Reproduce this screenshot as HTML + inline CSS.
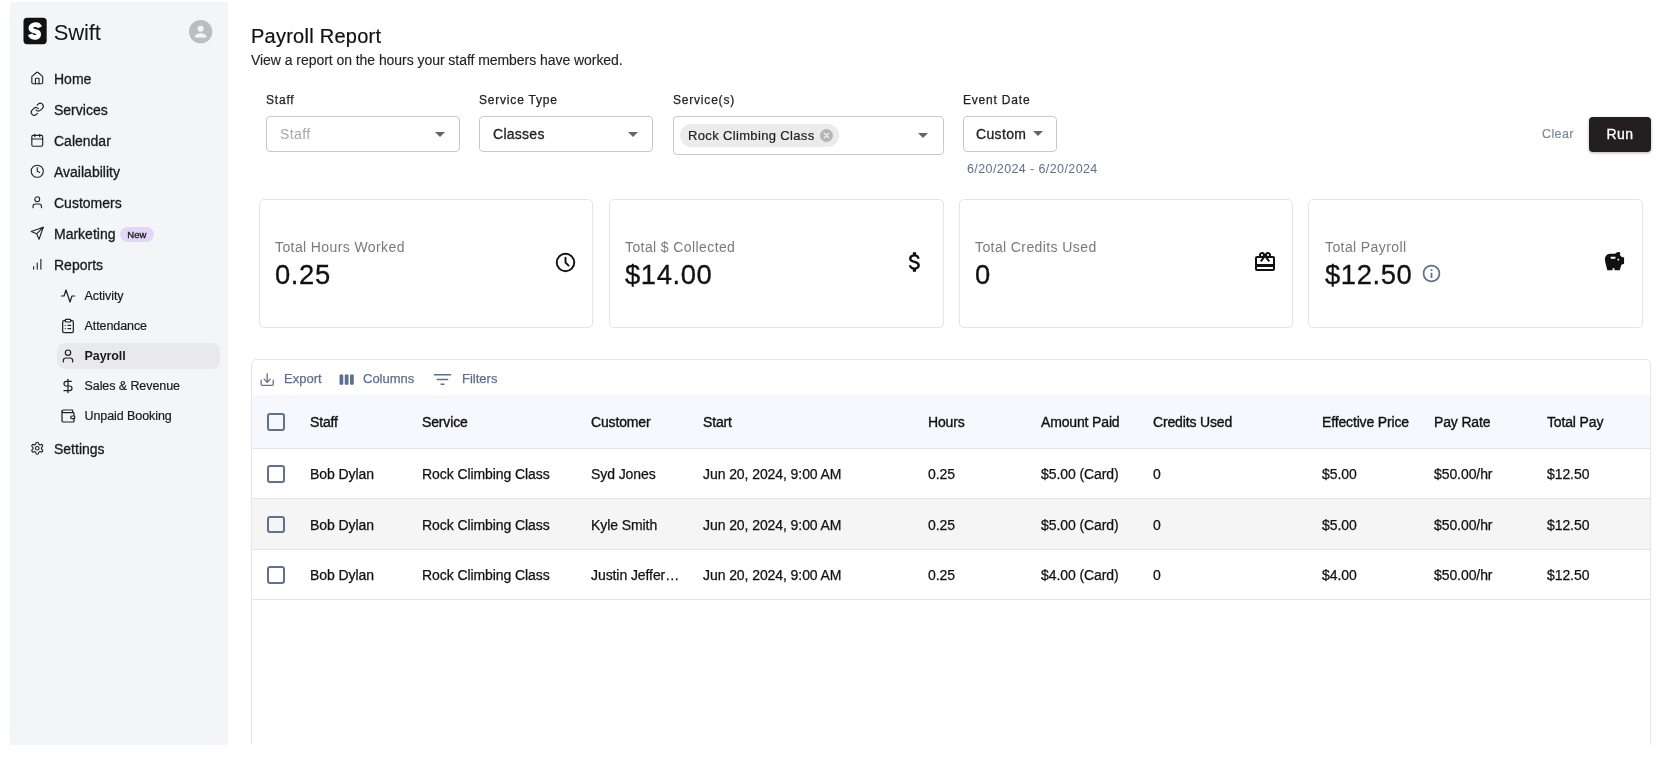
<!DOCTYPE html>
<html><head><meta charset="utf-8">
<style>
*{box-sizing:border-box;margin:0;padding:0}
html,body{width:1660px;height:758px;background:#fff;overflow:hidden}
body{font-family:"Liberation Sans",sans-serif;color:#1a1a1a;position:relative}
#clip{will-change:transform;position:absolute;left:0;top:0;width:1660px;height:745px;overflow:hidden;background:#fff}
.abs{position:absolute}
#side{position:absolute;left:10px;top:2px;width:218px;height:743px;background:#f4f5f7}
.nav{position:absolute;left:54px;font-size:14px;line-height:16px;color:#1a1a1a;white-space:nowrap;-webkit-text-stroke:0.3px #1a1a1a}
.sub{position:absolute;left:84.500px;letter-spacing:-0.080px;font-size:12.5px;line-height:16px;color:#1a1a1a;white-space:nowrap;-webkit-text-stroke:0.2px #1a1a1a}
.ico{position:absolute;overflow:visible}
.lbl{position:absolute;top:92.500px;font-size:12px;line-height:14px;letter-spacing:0.8px;color:#222;-webkit-text-stroke:0.25px #222;white-space:nowrap}
.sel{position:absolute;border:1px solid #c9c9c9;border-radius:4px;background:#fff}
.card{position:absolute;top:199px;width:335px;height:129px;border:1px solid #e5e5e5;border-radius:5px;background:#fff}
.card .t{position:absolute;left:15px;top:39px;font-size:14px;line-height:16px;color:#7a7a7a;letter-spacing:0.4px;white-space:nowrap}
.card .v{position:absolute;left:15px;top:59px;font-size:27.400px;line-height:32px;color:#111;letter-spacing:0.6px;white-space:nowrap;-webkit-text-stroke:0.300px #111}
#tbl{position:absolute;left:251px;top:359px;width:1400px;height:420px;border:1px solid #e6e6e6;border-radius:5px;background:#fff;overflow:hidden}
.tb{position:absolute;top:11.300px;font-size:13px;line-height:16px;color:#5f6f8f;white-space:nowrap;-webkit-text-stroke:0.250px #5f6f8f}
.row{position:absolute;left:0;width:1398px;border-bottom:1px solid #e5e5e5}
.c{position:absolute;font-size:14px;line-height:16px;color:#111;white-space:nowrap;letter-spacing:-0.08px;-webkit-text-stroke:0.250px #111;margin-top:0.400px}
.h{-webkit-text-stroke:0.350px #111;letter-spacing:-0.15px !important}
.cb{position:absolute;left:15px;width:17.500px;height:17.500px;border:2px solid #62708f;border-radius:3px;background:transparent}
</style></head><body>
<div id="clip">
<div id="side"></div>
<!-- logo -->
<svg class="ico" style="left:23px;top:17px" width="24" height="28" viewBox="-0.500 -0.800 24 28"><rect x="0" y="0" width="23.200" height="26.400" rx="3.600" fill="#121212"/><path d="M16.300 9.600 C15.400 7.200 12.800 6.600 10.600 7.000 C8.200 7.500 6.900 9.400 7.400 11.000 C8.000 12.800 10.200 13.100 12.200 13.600 C14.600 14.200 15.800 15.400 15.200 17.200 C14.600 19.000 12.400 19.800 10.200 19.400 C8.400 19.000 7.200 18.000 6.700 16.400" fill="none" stroke="#fff" stroke-width="4.600" stroke-linecap="butt"/></svg>
<div class="abs" style="left:53.700px;top:18.800px;font-size:22px;line-height:28px;letter-spacing:-0.100px;color:#151515">Swift</div>
<svg class="ico" style="left:189px;top:20.300px" width="23.300" height="23.300" viewBox="0 0 24 24"><circle cx="12" cy="12" r="12" fill="#bdbdbd"/><circle cx="12" cy="8.900" r="3.100" fill="#f4f5f7"/><path d="M5.900 18c0-3 4-4.300 6.100-4.300s6.100 1.300 6.100 4.300z" fill="#f4f5f7"/></svg>
<div class="abs" style="left:57px;top:343px;width:163px;height:26px;border-radius:8px;background:#e9e9eb"></div>
<svg class="ico" style="left:30.200px;top:70.75px" width="14.500" height="14.500" viewBox="0 0 24 24" fill="none" stroke="#222" stroke-width="1.850" stroke-linecap="round" stroke-linejoin="round"><path d="M15 21v-8a1 1 0 0 0-1-1h-4a1 1 0 0 0-1 1v8"/><path d="M3 10a2 2 0 0 1 .709-1.528l7-5.999a2 2 0 0 1 2.582 0l7 5.999A2 2 0 0 1 21 10v9a2 2 0 0 1-2 2H5a2 2 0 0 1-2-2z"/></svg>
<div class="nav" style="top:71px">Home</div>
<svg class="ico" style="left:30.200px;top:101.75px" width="14.500" height="14.500" viewBox="0 0 24 24" fill="none" stroke="#222" stroke-width="1.850" stroke-linecap="round" stroke-linejoin="round"><path d="M10 13a5 5 0 0 0 7.54.54l3-3a5 5 0 0 0-7.07-7.07l-1.72 1.71"/><path d="M14 11a5 5 0 0 0-7.54-.54l-3 3a5 5 0 0 0 7.07 7.07l1.71-1.71"/></svg>
<div class="nav" style="top:102px">Services</div>
<svg class="ico" style="left:30.200px;top:132.75px" width="14.500" height="14.500" viewBox="0 0 24 24" fill="none" stroke="#222" stroke-width="1.850" stroke-linecap="round" stroke-linejoin="round"><path d="M8 2v4"/><path d="M16 2v4"/><rect width="18" height="18" x="3" y="4" rx="2"/><path d="M3 10h18"/></svg>
<div class="nav" style="top:133px">Calendar</div>
<svg class="ico" style="left:30.200px;top:163.75px" width="14.500" height="14.500" viewBox="0 0 24 24" fill="none" stroke="#222" stroke-width="1.850" stroke-linecap="round" stroke-linejoin="round"><circle cx="12" cy="12" r="10"/><polyline points="12 6 12 12 16 14"/></svg>
<div class="nav" style="top:164px">Availability</div>
<svg class="ico" style="left:30.200px;top:194.75px" width="14.500" height="14.500" viewBox="0 0 24 24" fill="none" stroke="#222" stroke-width="1.850" stroke-linecap="round" stroke-linejoin="round"><path d="M19 21v-2a4 4 0 0 0-4-4H9a4 4 0 0 0-4 4v2"/><circle cx="12" cy="7" r="4"/></svg>
<div class="nav" style="top:195px">Customers</div>
<svg class="ico" style="left:30.200px;top:225.75px" width="14.500" height="14.500" viewBox="0 0 24 24" fill="none" stroke="#222" stroke-width="1.850" stroke-linecap="round" stroke-linejoin="round"><path d="m22 2-7 20-4-9-9-4Z"/><path d="M22 2 11 13"/></svg>
<div class="nav" style="top:226px">Marketing</div>
<svg class="ico" style="left:30.200px;top:256.75px" width="14.500" height="14.500" viewBox="0 0 24 24" fill="none" stroke="#222" stroke-width="1.850" stroke-linecap="round" stroke-linejoin="round"><line x1="18" x2="18" y1="20" y2="4"/><line x1="12" x2="12" y1="20" y2="10"/><line x1="6" x2="6" y1="20" y2="16"/></svg>
<div class="nav" style="top:257px">Reports</div>
<svg class="ico" style="left:30.200px;top:440.75px" width="14.500" height="14.500" viewBox="0 0 24 24" fill="none" stroke="#222" stroke-width="1.850" stroke-linecap="round" stroke-linejoin="round"><path d="M12.22 2h-.44a2 2 0 0 0-2 2v.18a2 2 0 0 1-1 1.73l-.43.25a2 2 0 0 1-2 0l-.15-.08a2 2 0 0 0-2.73.73l-.22.38a2 2 0 0 0 .73 2.73l.15.1a2 2 0 0 1 1 1.72v.51a2 2 0 0 1-1 1.74l-.15.09a2 2 0 0 0-.73 2.73l.22.38a2 2 0 0 0 2.73.73l.15-.08a2 2 0 0 1 2 0l.43.25a2 2 0 0 1 1 1.73V20a2 2 0 0 0 2 2h.44a2 2 0 0 0 2-2v-.18a2 2 0 0 1 1-1.73l.43-.25a2 2 0 0 1 2 0l.15.08a2 2 0 0 0 2.73-.73l.22-.39a2 2 0 0 0-.73-2.73l-.15-.08a2 2 0 0 1-1-1.74v-.5a2 2 0 0 1 1-1.74l.15-.09a2 2 0 0 0 .73-2.73l-.22-.38a2 2 0 0 0-2.73-.73l-.15.08a2 2 0 0 1-2 0l-.43-.25a2 2 0 0 1-1-1.73V4a2 2 0 0 0-2-2z"/><circle cx="12" cy="12" r="3"/></svg>
<div class="nav" style="top:441px">Settings</div>
<svg class="ico" style="left:59.500px;top:288px" width="16" height="16" viewBox="0 0 24 24" fill="none" stroke="#222" stroke-width="1.850" stroke-linecap="round" stroke-linejoin="round"><path d="M22 12h-4l-3 9L9 3l-3 9H2"/></svg>
<div class="sub" style="top:288px">Activity</div>
<svg class="ico" style="left:59.500px;top:318px" width="16" height="16" viewBox="0 0 24 24" fill="none" stroke="#222" stroke-width="1.850" stroke-linecap="round" stroke-linejoin="round"><rect width="8" height="4" x="8" y="2" rx="1" ry="1"/><path d="M16 4h2a2 2 0 0 1 2 2v14a2 2 0 0 1-2 2H6a2 2 0 0 1-2-2V6a2 2 0 0 1 2-2h2"/><path d="M12 11h4"/><path d="M12 16h4"/><path d="M8 11h.01"/><path d="M8 16h.01"/></svg>
<div class="sub" style="top:318px">Attendance</div>
<svg class="ico" style="left:59.500px;top:348px" width="16" height="16" viewBox="0 0 24 24" fill="none" stroke="#222" stroke-width="1.850" stroke-linecap="round" stroke-linejoin="round"><path d="M19 21v-2a4 4 0 0 0-4-4H9a4 4 0 0 0-4 4v2"/><circle cx="12" cy="7" r="4"/></svg>
<div class="sub" style="top:348px;font-weight:bold;-webkit-text-stroke:0">Payroll</div>
<svg class="ico" style="left:59.500px;top:378px" width="16" height="16" viewBox="0 0 24 24" fill="none" stroke="#222" stroke-width="1.850" stroke-linecap="round" stroke-linejoin="round"><line x1="12" x2="12" y1="2" y2="22"/><path d="M17 5H9.5a3.5 3.5 0 0 0 0 7h5a3.5 3.5 0 0 1 0 7H6"/></svg>
<div class="sub" style="top:378px">Sales &amp; Revenue</div>
<svg class="ico" style="left:59.500px;top:408px" width="16" height="16" viewBox="0 0 24 24" fill="none" stroke="#222" stroke-width="1.850" stroke-linecap="round" stroke-linejoin="round"><path d="M19 7V4a1 1 0 0 0-1-1H5a2 2 0 0 0 0 4h15a1 1 0 0 1 1 1v4h-3a2 2 0 0 0 0 4h3a1 1 0 0 0 1-1v-2a1 1 0 0 0-1-1"/><path d="M3 5v14a2 2 0 0 0 2 2h15a1 1 0 0 0 1-1v-4"/></svg>
<div class="sub" style="top:408px">Unpaid Booking</div>
<div class="abs" style="left:119.500px;top:227px;width:34.600px;height:15px;border-radius:8px;background:#e2d6fa;font-size:9.500px;line-height:15px;text-align:center;color:#1a1a1a;-webkit-text-stroke:0.300px #1a1a1a">New</div>
<div class="abs" style="left:251px;top:24px;font-size:20px;line-height:24px;letter-spacing:0.25px;color:#111;-webkit-text-stroke:0.200px #111;white-space:nowrap">Payroll Report</div>
<div class="abs" style="left:251px;top:52px;font-size:14px;line-height:16px;letter-spacing:-0.05px;color:#222;-webkit-text-stroke:0.120px #222;white-space:nowrap">View a report on the hours your staff members have worked.</div>
<div class="lbl" style="left:266px">Staff</div>
<div class="lbl" style="left:479px">Service Type</div>
<div class="lbl" style="left:673px">Service(s)</div>
<div class="lbl" style="left:963px">Event Date</div>
<!-- staff -->
<div class="sel" style="left:266px;top:116px;width:194px;height:36px"></div>
<div class="abs" style="left:280px;top:125.600px;font-size:14px;line-height:16px;letter-spacing:0.4px;color:#a8a8a8">Staff</div>
<svg class="ico" style="left:434.700px;top:131.600px" width="10" height="5.200" viewBox="0 0 10 5"><path d="M0 0h10L5 5z" fill="#666"/></svg>
<!-- service type -->
<div class="sel" style="left:479px;top:116px;width:174px;height:36px"></div>
<div class="abs" style="left:493px;top:125.600px;font-size:14px;line-height:16px;letter-spacing:0.27px;color:#222;-webkit-text-stroke:0.300px #222">Classes</div>
<svg class="ico" style="left:628.300px;top:131.600px" width="10" height="5.200" viewBox="0 0 10 5"><path d="M0 0h10L5 5z" fill="#666"/></svg>
<!-- services -->
<div class="sel" style="left:673px;top:116px;width:271px;height:39px"></div>
<div class="abs" style="left:680px;top:124px;width:159px;height:23px;border-radius:12px;background:#ebebeb"></div>
<div class="abs" style="left:688px;top:127.600px;font-size:13px;line-height:15px;letter-spacing:0.35px;color:#222;-webkit-text-stroke:0.2px #222;white-space:nowrap">Rock Climbing Class</div>
<svg class="ico" style="left:820px;top:129px" width="13" height="13" viewBox="0 0 13 13"><circle cx="6.500" cy="6.500" r="6.500" fill="#b5b5b5"/><path d="M4.200 4.200l4.600 4.600M8.800 4.200l-4.600 4.600" stroke="#ebebeb" stroke-width="1.400" stroke-linecap="round"/></svg>
<svg class="ico" style="left:918px;top:133px" width="10" height="5" viewBox="0 0 10 5"><path d="M0 0h10L5 5z" fill="#666"/></svg>
<!-- custom -->
<div class="sel" style="left:963px;top:116px;width:94px;height:36px"></div>
<div class="abs" style="left:976px;top:125.600px;font-size:14px;line-height:16px;letter-spacing:0.35px;color:#222;-webkit-text-stroke:0.300px #222">Custom</div>
<svg class="ico" style="left:1033px;top:131px" width="10" height="5" viewBox="0 0 10 5"><path d="M0 0h10L5 5z" fill="#666"/></svg>
<div class="abs" style="left:967px;top:162px;font-size:12.5px;line-height:14px;letter-spacing:0.4px;color:#5f6f8f;white-space:nowrap">6/20/2024 - 6/20/2024</div>
<!-- clear/run -->
<div class="abs" style="left:1542px;top:127px;font-size:12.5px;line-height:14px;letter-spacing:0.4px;color:#7c88a8;-webkit-text-stroke:0.200px #7c88a8;white-space:nowrap">Clear</div>
<div class="abs" style="left:1589px;top:117px;width:62px;height:35px;border-radius:4px;background:#231f20;box-shadow:0 1px 3px rgba(0,0,0,0.3)"></div>
<div class="abs" style="left:1589px;top:126px;width:62px;text-align:center;font-size:14px;line-height:16px;letter-spacing:0.5px;color:#fff;-webkit-text-stroke:0.3px #fff">Run</div>


<div class="card" style="left:259px;width:334px"><div class="t">Total Hours Worked</div><div class="v">0.25</div>
<svg class="ico" style="left:295px;top:52.200px" width="21" height="21" viewBox="0 0 24 24" fill="none" stroke="#111" stroke-width="2.2" stroke-linecap="round" stroke-linejoin="round"><circle cx="12" cy="12" r="10"/><polyline points="12 6.5 12 12 15.5 15.500"/></svg></div>
<div class="card" style="left:609px"><div class="t">Total $ Collected</div><div class="v">$14.00</div>
<svg class="ico" style="left:292.300px;top:49.200px" width="26" height="26" viewBox="0 0 24 24" fill="#111"><path d="M11.800 10.900c-2.270-.590-3-1.200-3-2.150 0-1.090 1.010-1.850 2.700-1.850 1.780 0 2.440.850 2.500 2.100h2.210c-.070-1.720-1.120-3.300-3.210-3.810V3h-3v2.160c-1.940.420-3.500 1.680-3.500 3.610 0 2.310 1.910 3.460 4.700 4.130 2.500.600 3 1.480 3 2.410 0 .690-.490 1.790-2.700 1.790-2.060 0-2.870-.920-2.980-2.100h-2.200c.120 2.190 1.760 3.420 3.680 3.830V21h3v-2.150c1.950-.370 3.500-1.500 3.500-3.550 0-2.840-2.430-3.810-4.700-4.400z"/></svg></div>
<div class="card" style="left:959px;width:334px"><div class="t">Total Credits Used</div><div class="v">0</div>
<svg class="ico" style="left:293px;top:50px" width="24" height="24" viewBox="0 0 24 24" fill="#111"><path d="M20 6h-2.180c.110-.310.180-.650.180-1 0-1.660-1.340-3-3-3-1.050 0-1.960.540-2.500 1.350l-.5.670-.5-.680C10.960 2.540 10.050 2 9 2 7.340 2 6 3.340 6 5c0 .350.070.690.180 1H4c-1.110 0-1.990.890-1.990 2L2 19c0 1.110.890 2 2 2h16c1.110 0 2-.890 2-2V8c0-1.110-.890-2-2-2zm-5-2c.550 0 1 .450 1 1s-.450 1-1 1-1-.450-1-1 .450-1 1-1zM9 4c.550 0 1 .450 1 1s-.450 1-1 1-1-.450-1-1 .450-1 1-1zm11 15H4v-2h16v2zm0-5H4V8h5.080L7 10.830 8.620 12 11 8.760l1-1.360 1 1.360L15.380 12 17 10.830 14.920 8H20v6z"/></svg></div>
<div class="card" style="left:1308px;width:335px"><div class="t" style="left:16px">Total Payroll</div><div class="v" style="left:16px">$12.50</div>
<svg class="ico" style="left:112px;top:63px" width="21" height="21" viewBox="0 0 24 24" fill="#5f6f8f"><path d="M11 7h2v2h-2zm0 4h2v6h-2zm1-9C6.480 2 2 6.480 2 12s4.480 10 10 10 10-4.480 10-10S17.520 2 12 2zm0 18c-4.410 0-8-3.590-8-8s3.590-8 8-8 8 3.590 8 8-3.590 8-8 8z"/></svg>
<svg class="ico" style="left:294px;top:50px" width="23" height="23" viewBox="0 0 24 24" fill="#111"><path d="M19.830 7.500l-2.270-2.270c.070-.420.180-.810.320-1.150.080-.180.120-.370.120-.580 0-.830-.670-1.500-1.500-1.500-1.640 0-3.090.790-4 2h-5C4.460 4 2 6.460 2 9.500S4.500 21 4.500 21H10v-2h2v2h5.500l1.680-5.590 2.820-.940V7.500h-2.170zM13 9H8V7h5v2zm3 2c-.550 0-1-.450-1-1s.450-1 1-1 1 .450 1 1-.450 1-1 1z"/></svg></div>

<div id="tbl">
<svg class="ico" style="left:8px;top:12.600px" width="14.400" height="13.600" viewBox="0 0 15 14" fill="none" stroke="#66738f" stroke-width="1.400" stroke-linecap="round" stroke-linejoin="round"><path d="M1.200 7.500v4a1.300 1.300 0 0 0 1.300 1.300h10a1.300 1.300 0 0 0 1.300-1.300v-4"/><path d="M7.500 0.800v8.400"/><path d="M4.300 6.300l3.200 3.200 3.200-3.200"/></svg>
<div class="tb" style="left:32px">Export</div>
<svg class="ico" style="left:85.500px;top:10.800px" width="18" height="17.400" preserveAspectRatio="none" viewBox="0 0 24 24" fill="#5f6f8f"><path d="M6 5H3c-.550 0-1 .450-1 1v12c0 .550.450 1 1 1h3c.550 0 1-.450 1-1V6c0-.550-.450-1-1-1zm14 0h-3c-.550 0-1 .450-1 1v12c0 .550.450 1 1 1h3c.550 0 1-.450 1-1V6c0-.550-.450-1-1-1zm-7 0h-3c-.550 0-1 .450-1 1v12c0 .550.450 1 1 1h3c.550 0 1-.450 1-1V6c0-.550-.450-1-1-1z"/></svg>
<div class="tb" style="left:111px">Columns</div>
<svg class="ico" style="left:178.500px;top:7.500px" width="23" height="23" viewBox="0 0 24 24" fill="#5f6f8f"><path d="M10 17.750h4v-1.500h-4zM3 6.250v1.500h18v-1.500zM6 12.750h12v-1.500H6z"/></svg>
<div class="tb" style="left:210px">Filters</div>
<div class="row" style="top:35px;height:54px;background:#f7f8fd"></div>
<div class="cb" style="top:53px"></div>
<div class="c h" style="left:58px;top:54px">Staff</div>
<div class="c h" style="left:170px;top:54px">Service</div>
<div class="c h" style="left:339px;top:54px">Customer</div>
<div class="c h" style="left:451px;top:54px">Start</div>
<div class="c h" style="left:676px;top:54px">Hours</div>
<div class="c h" style="left:789px;top:54px">Amount Paid</div>
<div class="c h" style="left:901px;top:54px">Credits Used</div>
<div class="c h" style="left:1070px;top:54px">Effective Price</div>
<div class="c h" style="left:1182px;top:54px">Pay Rate</div>
<div class="c h" style="left:1295px;top:54px">Total Pay</div>
<div class="row" style="top:89px;height:50px"></div>
<div class="cb" style="top:105px"></div>
<div class="c" style="left:58px;top:106px">Bob Dylan</div>
<div class="c" style="left:170px;top:106px">Rock Climbing Class</div>
<div class="c" style="left:339px;top:106px">Syd Jones</div>
<div class="c" style="left:451px;top:106px">Jun 20, 2024, 9:00 AM</div>
<div class="c" style="left:676px;top:106px">0.25</div>
<div class="c" style="left:789px;top:106px">$5.00 (Card)</div>
<div class="c" style="left:901px;top:106px">0</div>
<div class="c" style="left:1070px;top:106px">$5.00</div>
<div class="c" style="left:1182px;top:106px">$50.00/hr</div>
<div class="c" style="left:1295px;top:106px">$12.50</div>
<div class="row" style="top:139px;height:51px;background:#f5f5f5"></div>
<div class="cb" style="top:155.500px"></div>
<div class="c" style="left:58px;top:156.500px">Bob Dylan</div>
<div class="c" style="left:170px;top:156.500px">Rock Climbing Class</div>
<div class="c" style="left:339px;top:156.500px">Kyle Smith</div>
<div class="c" style="left:451px;top:156.500px">Jun 20, 2024, 9:00 AM</div>
<div class="c" style="left:676px;top:156.500px">0.25</div>
<div class="c" style="left:789px;top:156.500px">$5.00 (Card)</div>
<div class="c" style="left:901px;top:156.500px">0</div>
<div class="c" style="left:1070px;top:156.500px">$5.00</div>
<div class="c" style="left:1182px;top:156.500px">$50.00/hr</div>
<div class="c" style="left:1295px;top:156.500px">$12.50</div>
<div class="row" style="top:190px;height:50px"></div>
<div class="cb" style="top:206px"></div>
<div class="c" style="left:58px;top:207px">Bob Dylan</div>
<div class="c" style="left:170px;top:207px">Rock Climbing Class</div>
<div class="c" style="left:339px;top:207px">Justin Jeffer…</div>
<div class="c" style="left:451px;top:207px">Jun 20, 2024, 9:00 AM</div>
<div class="c" style="left:676px;top:207px">0.25</div>
<div class="c" style="left:789px;top:207px">$4.00 (Card)</div>
<div class="c" style="left:901px;top:207px">0</div>
<div class="c" style="left:1070px;top:207px">$4.00</div>
<div class="c" style="left:1182px;top:207px">$50.00/hr</div>
<div class="c" style="left:1295px;top:207px">$12.50</div>
</div>
</div>
</body></html>
